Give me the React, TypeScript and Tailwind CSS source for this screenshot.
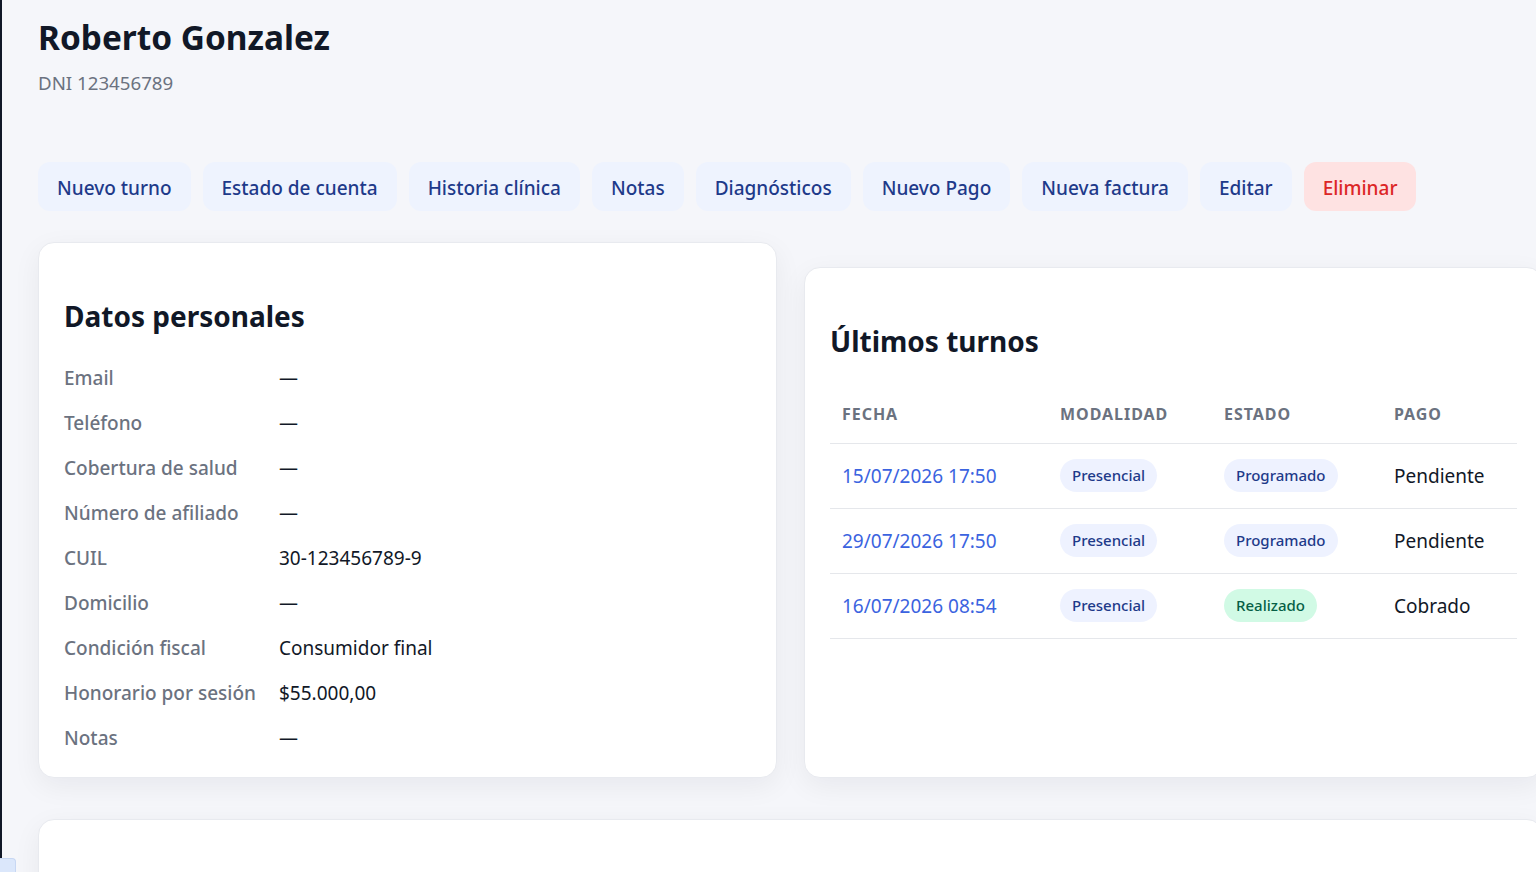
import React from 'react';

interface Turno {
	fecha: string;
	modalidad: string;
	estado: 'Programado' | 'Realizado';
	pago: string;
}

const acciones = [
	'Nuevo turno',
	'Estado de cuenta',
	'Historia clínica',
	'Notas',
	'Diagnósticos',
	'Nuevo Pago',
	'Nueva factura',
	'Editar',
];

const datos: [string, string][] = [
	['Email', '—'],
	['Teléfono', '—'],
	['Cobertura de salud', '—'],
	['Número de afiliado', '—'],
	['CUIL', '30-123456789-9'],
	['Domicilio', '—'],
	['Condición fiscal', 'Consumidor final'],
	['Honorario por sesión', '$55.000,00'],
	['Notas', '—'],
];

const turnos: Turno[] = [
	{ fecha: '15/07/2026 17:50', modalidad: 'Presencial', estado: 'Programado', pago: 'Pendiente' },
	{ fecha: '29/07/2026 17:50', modalidad: 'Presencial', estado: 'Programado', pago: 'Pendiente' },
	{ fecha: '16/07/2026 08:54', modalidad: 'Presencial', estado: 'Realizado', pago: 'Cobrado' },
];

const card =
	'bg-white rounded-[16px] border border-[#e8eaef] shadow-[0_8px_28px_rgba(15,23,42,0.06)]';

function Badge({ text, tone }: { text: string; tone: 'blue' | 'green' }) {
	return (
		<span
			className={
				tone === 'green'
					? 'inline-flex items-center h-[33px] px-3 rounded-full bg-[#d1fae5] text-[#065f46] text-[15px] font-medium'
					: 'inline-flex items-center h-[33px] px-3 rounded-full bg-[#eef2ff] text-[#1e3a8a] text-[15px] font-medium'
			}
		>
			{text}
		</span>
	);
}

export default function App() {
	return (
		<div
			className="relative h-screen w-screen overflow-hidden bg-[#f5f6fa] flex"
			style={{ fontFamily: '"Noto Sans", "Open Sans", sans-serif' }}
		>
			<div className="w-[2px] shrink-0 bg-[#111827]" />

			<main className="shrink-0 w-[1541px] pl-[36px] pt-[15px]">
				<h1 className="text-[33.4px] leading-[44px] font-bold text-[#111827]">Roberto Gonzalez</h1>
				<p className="mt-[10px] text-[18.7px] leading-[28px] text-[#6b7280]">DNI 123456789</p>

				<div className="mt-[65px] flex gap-[12px]">
					{acciones.map((a) => (
						<button
							key={a}
							className="h-[49px] px-[19px] pt-[3px] rounded-[12px] bg-[#eef3fe] text-[#1e3a8a] text-[19px] font-medium"
						>
							{a}
						</button>
					))}
					<button className="h-[49px] px-[19px] pt-[3px] rounded-[12px] bg-[#fee2e2] text-[#dc2626] text-[19px] font-medium">
						Eliminar
					</button>
				</div>

				<div className="mt-[31px] grid grid-cols-[739px_739px] gap-[27px]">
					<section className={`${card} pt-[55px] pb-[16px] px-[25px]`}>
						<h2 className="text-[28px] leading-[36px] font-bold text-[#111827]">Datos personales</h2>
						<div className="mt-[22px]">
							{datos.map(([label, value]) => (
								<div key={label} className="h-[45px] flex items-center text-[19px]">
									<span className="w-[215px] shrink-0 text-[#6b7280] font-medium">{label}</span>
									<span className="text-[#111827]">{value}</span>
								</div>
							))}
						</div>
					</section>

					<section className={`${card} mt-[25px] pt-[55px] px-[25px]`}>
						<h2 className="text-[28px] leading-[36px] font-bold text-[#111827]">Últimos turnos</h2>
						<table className="mt-[28px] w-full border-collapse text-left">
							<thead>
								<tr className="border-b border-[#e5e7eb]">
									{['Fecha', 'Modalidad', 'Estado', 'Pago'].map((h, i) => (
										<th
											key={h}
											className={`h-[56px] px-3 pb-[1px] text-[16px] font-bold uppercase tracking-[0.06em] text-[#6b7280] ${
												i === 0 ? 'w-[218px]' : i === 1 ? 'w-[164px]' : i === 2 ? 'w-[170px]' : ''
											}`}
										>
											{h}
										</th>
									))}
								</tr>
							</thead>
							<tbody>
								{turnos.map((t) => (
									<tr key={t.fecha} className="border-b border-[#e5e7eb] h-[65px]">
										<td className="px-3 pt-[2px] text-[19px] text-[#3b63e0]">{t.fecha}</td>
										<td className="px-3">
											<Badge text={t.modalidad} tone="blue" />
										</td>
										<td className="px-3">
											<Badge text={t.estado} tone={t.estado === 'Realizado' ? 'green' : 'blue'} />
										</td>
										<td className="px-3 pt-[2px] text-[19px] text-[#111827]">{t.pago}</td>
									</tr>
								))}
							</tbody>
						</table>
					</section>
				</div>

				<section className={`${card} mt-[41px] h-[200px]`} />
			</main>

			<div className="absolute left-0 bottom-0 w-[16px] h-[14px] rounded-tr-[4px] bg-[#dbe7fb] border-t border-r border-[#c7d7f3]" />
		</div>
	);
}
